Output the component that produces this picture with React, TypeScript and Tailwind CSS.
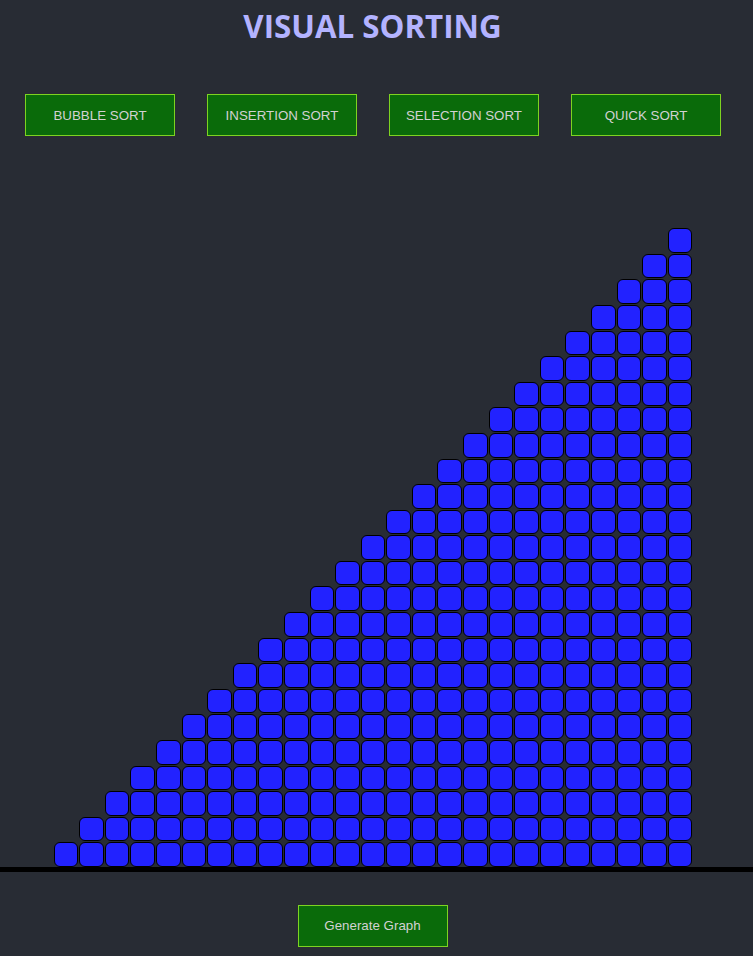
import React from "react";

const sorts = ["BUBBLE SORT", "INSERTION SORT", "SELECTION SORT", "QUICK SORT"];
const values = Array.from({ length: 25 }, (_, i) => i + 1);

const Bar: React.FC<{ value: number }> = ({ value }) => {
  return (
    <div className="flex w-[25.6px] flex-col items-start">
      {Array.from({ length: value }, (_, j) => (
        <div
          key={j}
          className="ml-[1px] mt-[1px] h-[24.6px] w-[24.6px] rounded-[6px] border border-black bg-[#2222ff]"
        />
      ))}
    </div>
  );
};

export default function App() {
  return (
    <div className="min-h-[956px] w-full bg-[#282c34] font-['Liberation_Sans',Arial,sans-serif]">
      <div className="w-[745px]">
        <h1 className="h-[50px] text-center font-['Open_Sans',sans-serif] text-[31.3px] font-bold leading-[52px] text-[#b3b3ff]">
          VISUAL SORTING
        </h1>

        {/* sort buttons */}
        <div className="mt-[44px] flex gap-[32px] pl-[25px]">
          {sorts.map((s) => (
            <button
              key={s}
              className="h-[42px] w-[150px] border border-[#7ed321] bg-[#0a6b0a] pt-[1px] text-[13.33px] text-[#d2d2d2]"
            >
              {s}
            </button>
          ))}
        </div>

        {/* graph */}
        <div className="flex h-[731px] items-end justify-center">
          {values.map((v) => (
            <Bar key={v} value={v} />
          ))}
        </div>
      </div>

      <div className="h-[5px] w-full bg-black" />

      <div className="flex w-[745px] justify-center pt-[33px]">
        <button className="h-[42px] w-[150px] border border-[#7ed321] bg-[#0a6b0a] text-[13.33px] text-[#d2d2d2]">
          Generate Graph
        </button>
      </div>
    </div>
  );
}
